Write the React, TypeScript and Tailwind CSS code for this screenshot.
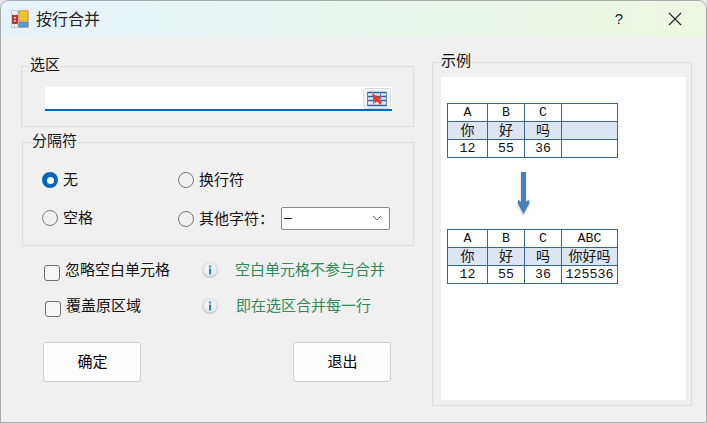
import React from "react"

const cjk = "font-['Noto_Sans_CJK_SC','Noto_Sans',sans-serif]"

const AppIcon = () => (
    <svg width="18" height="18" viewBox="0 0 18 18" className="shrink-0">
        <rect x="0" y="0" width="18" height="18" fill="#c8c8c8" />
        <rect x="1" y="1" width="5" height="3.5" fill="#f2f2f2" />
        <rect x="1" y="14" width="2" height="3" fill="#f2f2f2" />
        <rect x="4" y="14" width="2" height="3" fill="#f2f2f2" />
        <rect x="1.5" y="5.5" width="5" height="8" fill="#c8322c" stroke="#8c1f1c" strokeWidth="0.6" />
        <rect x="3" y="7" width="2" height="1.5" fill="#f3c4b8" />
        <rect x="3" y="10" width="2" height="1.5" fill="#f3c4b8" />
        <rect x="8" y="1" width="9" height="10" fill="#f6c428" stroke="#b9861a" strokeWidth="0.6" />
        <rect x="8" y="12.5" width="9" height="4.5" fill="#5b9be0" stroke="#3a6ea8" strokeWidth="0.6" />
    </svg>
)

const RangeIcon = () => (
    <svg width="20" height="16" viewBox="0 0 20 16">
        <rect x="0" y="1" width="20" height="14" fill="#dfe8f5" />
        <path d="M0 1.5H20M0 5.5H20M0 9.5H20M0 14.5H20" stroke="#2f5fa8" strokeWidth="1.4" />
        <path d="M0.5 1V15M6.5 1V15M13.5 1V15M19.5 1V15" stroke="#5c84c0" strokeWidth="1" />
        <path d="M5 3L14 6.5L12 8.5L15 11.5L13 13.5L10 10.5L8 12.5Z" fill="#e0392b" />
    </svg>
)

const InfoIcon = () => (
    <svg width="16" height="16" viewBox="0 0 16 16" className="block">
        <defs>
            <radialGradient id="info-bg" cx="50%" cy="45%" r="55%">
                <stop offset="0%" stopColor="#f8f8f8" />
                <stop offset="65%" stopColor="#eeeeee" />
                <stop offset="100%" stopColor="#c6c6c6" />
            </radialGradient>
        </defs>
        <circle cx="8" cy="8" r="8" fill="url(#info-bg)" />
        <rect x="7" y="3.5" width="2.2" height="2" fill="#2a9fd8" />
        <rect x="7" y="6.5" width="2.2" height="6" fill="#1b8ccc" />
    </svg>
)

const Arrow = () => (
    <svg width="20" height="48" viewBox="0 0 20 48" className="block">
        <defs>
            <filter id="arrow-shadow" x="-30%" y="-10%" width="160%" height="120%">
                <feGaussianBlur stdDeviation="0.8" />
            </filter>
        </defs>
        <path d="M8 1H13V31L15.5 28.5L16.5 32L10.5 43L4.5 32L5.5 28.5L8 31Z" fill="#9a9a9a" opacity="0.5" filter="url(#arrow-shadow)" transform="translate(0 1)" />
        <path d="M8 0H13V30L15.5 27.5L16.5 31L10.5 42L4.5 31L5.5 27.5L8 30Z" fill="#4a7ebb" />
    </svg>
)

const Radio = ({ label, checked }: { label: string; checked?: boolean }) => (
    <div className="flex h-[22px] items-center gap-[5px]">
        {checked ? (
            <span className="flex size-4 items-center justify-center rounded-full bg-[#0067c0]">
                <span className="size-[7px] rounded-full bg-white" />
            </span>
        ) : (
            <span className="size-4 rounded-full border border-[#7a7a7a]" />
        )}
        <span className="pb-[2px]">{label}</span>
    </div>
)

const Check = ({ label, tip, nudge }: { label: string; tip: string; nudge?: boolean }) => (
    <div className="flex h-[22px] items-center">
        <div className={nudge ? "flex w-[181px] items-center pl-[24px]" : "flex w-[181px] items-center pl-[23px]"}>
            <span className="mt-[6px] size-4 rounded-[3px] border border-[#6e6e6e] bg-[#f6f6f6]" />
            <span className="ml-[5px] pb-[2px]">{label}</span>
        </div>
        <div className="w-[33px]">
            <InfoIcon />
        </div>
        <span className={nudge ? "ml-px pb-[2px] text-[#2e8b57]" : "pb-[2px] text-[#2e8b57]"}>{tip}</span>
    </div>
)

const Btn = ({ label }: { label: string }) => (
    <button className="h-10 w-[98px] rounded-[3px] border border-[#cfcfcf] bg-[#fdfdfd] pb-[3px] pl-px text-[15px] text-black">
        {label}
    </button>
)

const SampleTable = ({ rows }: { rows: string[][] }) => (
    <table className="w-[170px] table-fixed border-collapse text-center text-[#111]">
        <colgroup>
            <col className="w-[40px]" />
            <col className="w-[37px]" />
            <col className="w-[37px]" />
            <col className="w-[56px]" />
        </colgroup>
        <tbody>
            {rows.map((row, i) => (
                <tr key={i} className={i === 1 ? "h-[18px] bg-[#dce6f2]" : "h-[18px]"}>
                    {row.map((cell, j) => (
                        <td
                            key={j}
                            className={
                                i === 1
                                    ? "border border-[#3a6494] p-0 pb-[2px] text-[14px] leading-[15px]"
                                    : "border border-[#3a6494] p-0 font-['Liberation_Mono',monospace] text-[13.3px] leading-none"
                            }
                        >
                            {cell}
                        </td>
                    ))}
                </tr>
            ))}
        </tbody>
    </table>
)

export default function App() {
    return (
        <div className={`h-[423px] w-[707px] overflow-hidden bg-[#e4e4e4] text-[15px] leading-5 text-[#111] ${cjk}`}>
            <div className="h-full overflow-hidden rounded-t-[9px] border border-[#a9a9a9] bg-[#f0f0f0]">
                {/* Title bar */}
                <div className="flex h-[36px] items-center bg-gradient-to-r from-[#e6f2f9] via-[#e8f5ee] to-[#edf7e2] pl-[10px] pr-[24px]">
                    <AppIcon />
                    <span className="ml-[7px] pb-[2px] text-[16px] text-[#222]">按行合并</span>
                    <span className="ml-auto font-['Liberation_Sans',sans-serif] text-[15px] text-[#222]">?</span>
                    <svg width="14" height="14" viewBox="0 0 14 14" className="ml-[45px]">
                        <path d="M1 1L13 13M13 1L1 13" stroke="#222" strokeWidth="1.1" />
                    </svg>
                </div>

                {/* Body */}
                <div className="flex gap-[18px] pl-[20px]">
                    <div className="w-[393px]">
                        <fieldset className="mt-[19px] h-[71px] border border-[#dcdcdc]">
                            <legend className="ml-[7px] px-[1px] pb-[4px] leading-4">选区</legend>
                            <div className="ml-[23px] mt-[11px] flex h-[24px] w-[347px] border-b-2 border-[#0067c0] bg-white">
                                <div className="flex-1" />
                                <div className="mr-px mt-px flex h-[21px] w-[28px] items-center justify-center rounded-[3px] border border-[#dadada] bg-[#f4f4f4]">
                                    <RangeIcon />
                                </div>
                            </div>
                        </fieldset>

                        <fieldset className="ml-px mt-[5px] h-[114px] border border-[#dcdcdc]">
                            <legend className="ml-[8px] px-[1px] pb-[4px] leading-4">分隔符</legend>
                            <div className="grid grid-cols-[136px_1fr] gap-y-[16px] pl-[19px] pt-[17px]">
                                <Radio label="无" checked />
                                <Radio label="换行符" />
                                <Radio label="空格" />
                                <div className="flex items-center">
                                    <Radio label="其他字符：" />
                                    <div className="ml-[7px] flex h-[23px] w-[109px] items-center justify-between rounded-[2px] border border-[#8a8a8a] bg-white pb-[3px] pl-[2px] pr-[7px] font-['Liberation_Sans',sans-serif] text-[14px]">
                                        <span>–</span>
                                        <svg width="10" height="7" viewBox="0 0 10 7" className="mt-[3px]">
                                            <path d="M1 1L5 5L9 1" fill="none" stroke="#666" strokeWidth="1" />
                                        </svg>
                                    </div>
                                </div>
                            </div>
                        </fieldset>

                        <div className="mt-[13px] flex flex-col gap-[14px]">
                            <Check label="忽略空白单元格" tip="空白单元格不参与合并" />
                            <Check label="覆盖原区域" tip="即在选区合并每一行" nudge />
                        </div>

                        <div className="mt-[25px] flex w-[370px] justify-between pl-[22px]">
                            <Btn label="确定" />
                            <Btn label="退出" />
                        </div>
                    </div>

                    <fieldset className="mt-[15px] h-[354px] w-[260px] border border-[#dcdcdc] pl-[8px] pr-[5px]">
                        <legend className="pb-[4px] leading-4">示例</legend>
                        <div className="mt-[5px] h-[323px] bg-white pl-[6px] pt-[26px]">
                            <SampleTable
                                rows={[
                                    ["A", "B", "C", ""],
                                    ["你", "好", "吗", ""],
                                    ["12", "55", "36", ""],
                                ]}
                            />
                            <div className="ml-[66px] mt-[14px]">
                                <Arrow />
                            </div>
                            <div className="mt-[9px]">
                                <SampleTable
                                    rows={[
                                        ["A", "B", "C", "ABC"],
                                        ["你", "好", "吗", "你好吗"],
                                        ["12", "55", "36", "125536"],
                                    ]}
                                />
                            </div>
                        </div>
                    </fieldset>
                </div>
            </div>
        </div>
    )
}
